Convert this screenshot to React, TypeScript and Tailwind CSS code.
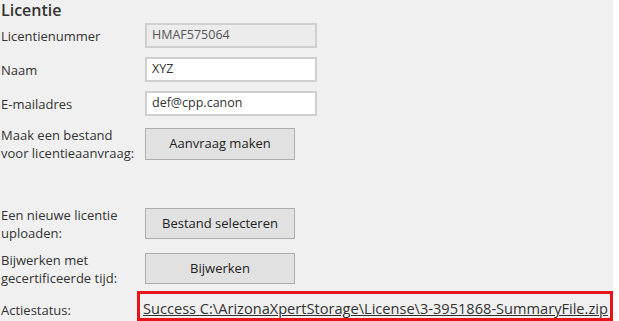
// Licentie settings panel
const font = { fontFamily: '"Open Sans", "Noto Sans", sans-serif' };

function Label({ children }: { children: React.ReactNode }) {
  return <div className="w-[144px] shrink-0 text-[13px] leading-[18px] text-[#333]">{children}</div>;
}

function Field({ value, disabled }: { value: string; disabled?: boolean }) {
  return (
    <div
      className={`w-[172px] h-[25px] border-2 border-[#cfcfcf] flex items-center px-[5px] text-[12.5px] ${
        disabled ? "bg-[#ececec] text-[#555]" : "bg-white text-[#333]"
      }`}
    >
      {value}
    </div>
  );
}

function Btn({ children }: { children: React.ReactNode }) {
  return (
    <button className="w-[150px] h-full bg-[#e1e1e1] border border-[#adadad] text-[13px] text-[#222]">
      {children}
    </button>
  );
}

export default function App() {
  return (
    <div className="w-[619px] h-[321px] bg-white overflow-hidden" style={font}>
      <div className="w-[613px] h-full bg-[#f0f0f0] pl-[1px]">
        <h2 className="h-[18px] text-[16px] leading-[20px] font-semibold text-[#333]">Licentie</h2>

        <div className="flex items-center h-[25px] mt-[5px]">
          <Label>Licentienummer</Label>
          <Field value="HMAF575064" disabled />
        </div>
        <div className="flex items-center h-[25px] mt-[9px]">
          <Label>Naam</Label>
          <Field value="XYZ" />
        </div>
        <div className="flex items-center h-[25px] mt-[9px]">
          <Label>E-mailadres</Label>
          <Field value="def@cpp.canon" />
        </div>

        <div className="flex items-center h-[32px] mt-[12px]">
          <Label>
            Maak een bestand
            <br />
            voor licentieaanvraag:
          </Label>
          <Btn>Aanvraag maken</Btn>
        </div>

        <div className="flex items-center h-[31px] mt-[48px]">
          <Label>
            Een nieuwe licentie
            <br />
            uploaden:
          </Label>
          <Btn>Bestand selecteren</Btn>
        </div>

        <div className="flex items-center h-[31px] mt-[14px]">
          <Label>
            Bijwerken met
            <br />
            gecertificeerde tijd:
          </Label>
          <Btn>Bijwerken</Btn>
        </div>

        <div className="flex items-center h-[30px] mt-[7px]">
          <Label>
            <span className="relative top-[4px]">Actiestatus:</span>
          </Label>
          <div className="-ml-[8px] w-[478px] h-[30px] border-[3px] border-[#e8141c] flex items-end pl-[3px] text-[14.6px] leading-[20px] text-[#333] underline whitespace-nowrap">
            Success C:\ArizonaXpertStorage\License\3-3951868-SummaryFile.zip
          </div>
        </div>
      </div>
    </div>
  );
}
